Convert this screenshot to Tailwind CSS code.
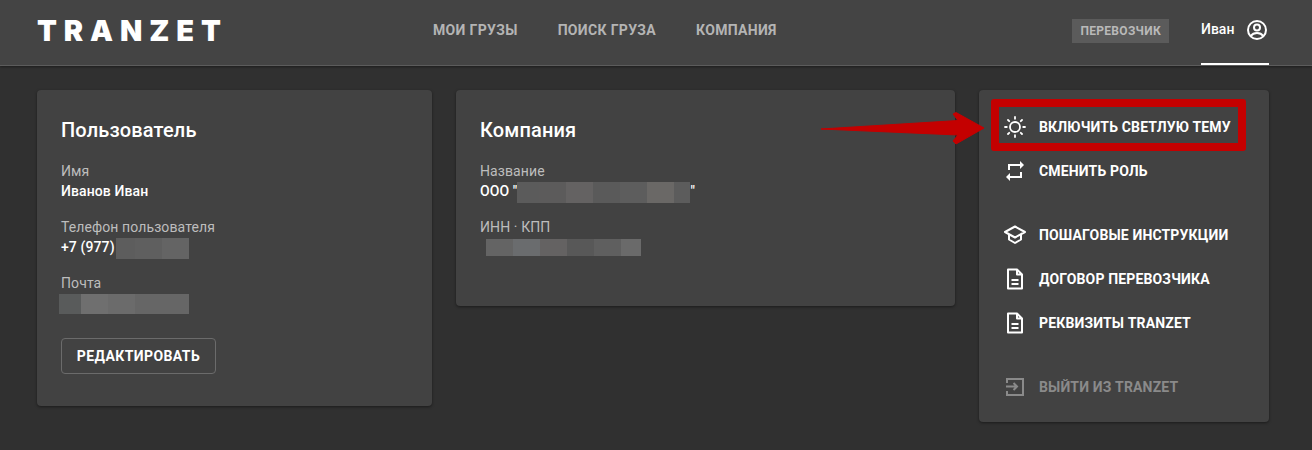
<!DOCTYPE html>
<html lang="ru">
<head>
<meta charset="utf-8">
<script src="https://cdn.jsdelivr.net/npm/@tailwindcss/browser@4"></script>
</head>
<body class="m-0 h-[450px] w-[1312px] overflow-hidden bg-[#303030] font-['Roboto',sans-serif] text-white relative">
<header class="h-[66px] bg-[#444444] border-b border-[#5c5c5c] flex items-start pl-[37px] pr-[43px] relative shadow-[0_1px_2px_rgba(0,0,0,0.4)]">
  <div class="w-[190px] mt-[14px] font-['Inter',sans-serif] font-black text-[29px] leading-[34px] tracking-[6.9px] text-white whitespace-nowrap">TRANZET</div>
  <nav class="flex gap-[40px] ml-[206px] mt-[22px] text-[14px] leading-[16px] font-bold tracking-[0.33px] text-[#b4b4b4] whitespace-nowrap">
    <span>МОИ ГРУЗЫ</span><span>ПОИСК ГРУЗА</span><span>КОМПАНИЯ</span>
  </nav>
  <div class="ml-auto flex items-start">
    <span class="mt-[19px] h-[24px] px-[8px] bg-[#5b5b5b] text-[#b9b9b9] text-[12px] font-bold tracking-[0.3px] leading-[24px]">ПЕРЕВОЗЧИК</span>
    <div class="ml-[32px] w-[68px] h-[65px] border-b-2 border-white flex items-start justify-between">
      <span class="mt-[21px] text-[14px] leading-[16px] font-medium">Иван</span>
      <svg class="mt-[19px] mr-[1px]" width="22" height="22" viewBox="0 0 22 22" fill="none" stroke="white" stroke-width="2"><circle cx="11" cy="11" r="9"/><circle cx="11" cy="8.500" r="3"/><path d="M4.800 17c1.500-2.200 3.600-3 6.200-3s4.700.8 6.200 3"/></svg>
    </div>
  </div>
</header>
<main class="flex gap-[24px] items-start pl-[37px] pt-[24px]">
  <section class="w-[395px] h-[316px] bg-[#424242] rounded-[4px] shadow-[0_1px_3px_rgba(0,0,0,0.45)] px-[24px] pt-[28px]">
    <h2 class="text-[20px] leading-[24px] font-medium tracking-[0.15px]">Пользователь</h2>
    <div class="mt-[19px] text-[14px] leading-[20px] tracking-[0.1px]">
      <div class="text-[#bdbdbd]">Имя</div>
      <div class="font-medium">Иванов Иван</div>
      <div class="mt-[16px] text-[#bdbdbd]">Телефон пользователя</div>
      <div class="font-medium flex h-[20px]">+7 (977)<span class="flex h-[21px] mt-[1px] ml-[1px]"><i class="w-[19px] bg-[#5d5d5d]"></i><i class="w-[27px] bg-[#5f5f5f]"></i><i class="w-[27px] bg-[#646464]"></i></span></div>
      <div class="mt-[16px] text-[#bdbdbd]">Почта</div>
      <div class="flex h-[20px] -ml-[2px] mt-[1px] -mb-[1px]"><i class="w-[22px] bg-[#595b5b]"></i><i class="w-[27px] bg-[#6f6f6f]"></i><i class="w-[27px] bg-[#6b6b6b]"></i><i class="w-[54px] bg-[#666666]"></i></div>
    </div>
    <button class="mt-[25px] w-[155px] h-[36px] border border-[#6b6b6b] rounded-[4px] text-[14px] font-bold tracking-[0.4px] leading-[34px] text-center block">РЕДАКТИРОВАТЬ</button>
  </section>
  <section class="w-[499px] h-[216px] bg-[#424242] rounded-[4px] shadow-[0_1px_3px_rgba(0,0,0,0.45)] px-[24px] pt-[28px]">
    <h2 class="text-[20px] leading-[24px] font-medium tracking-[0.15px]">Компания</h2>
    <div class="mt-[19px] text-[14px] leading-[20px] tracking-[0.1px]">
      <div class="text-[#bdbdbd]">Название</div>
      <div class="font-medium flex h-[20px]">ООО "<span class="flex h-[21px] mt-[1px]"><i class="w-[22px] bg-[#5b5b5b]"></i><i class="w-[27px] bg-[#5c5b5b]"></i><i class="w-[27px] bg-[#646262]"></i><i class="w-[27px] bg-[#5a5a5a]"></i><i class="w-[27px] bg-[#5d5d5d]"></i><i class="w-[27px] bg-[#6a6866]"></i><i class="w-[16px] bg-[#5c5c5c]"></i></span>"</div>
      <div class="mt-[16px] text-[#bdbdbd]">ИНН · КПП</div>
      <div class="flex h-[17px] ml-[6px] mt-[2px]"><i class="w-[27px] bg-[#646464]"></i><i class="w-[27px] bg-[#6a6c6e]"></i><i class="w-[27px] bg-[#646262]"></i><i class="w-[27px] bg-[#585858]"></i><i class="w-[27px] bg-[#5f5f5f]"></i><i class="w-[20px] bg-[#6a6a6a]"></i></div>
    </div>
  </section>
  <aside class="w-[290px] h-[332px] bg-[#424242] rounded-[4px] shadow-[0_1px_3px_rgba(0,0,0,0.45)] pt-[15px] text-[14px] font-bold tracking-[0.15px] whitespace-nowrap">
    <div class="flex items-center h-[44px] pl-[24px] gap-[12px]">
      <svg width="24" height="24" viewBox="0 0 24 24" fill="none" stroke="white" stroke-width="1.800" stroke-linecap="round"><circle cx="12" cy="12" r="5"/><path d="M12 2v1.800M12 20.200V22M2 12h1.800M20.200 12H22M5 5l1.200 1.200M17.800 17.800 19 19M5 19l1.200-1.200M17.800 6.200 19 5"/></svg>
      <span>ВКЛЮЧИТЬ СВЕТЛУЮ ТЕМУ</span>
    </div>
    <div class="flex items-center h-[44px] pl-[24px] gap-[12px]">
      <svg width="24" height="24" viewBox="0 0 24 24" fill="white"><path d="M7 7h10v3l4-4-4-4v3H5v6h2zm10 10H7v-3l-4 4 4 4v-3h12v-6h-2z"/></svg>
      <span>СМЕНИТЬ РОЛЬ</span>
    </div>
    <div class="flex items-center h-[44px] pl-[24px] gap-[12px] mt-[20px]">
      <svg width="24" height="24" viewBox="0 0 24 24" fill="none" stroke="white" stroke-width="2" stroke-linejoin="round"><path d="M12 3.500 2 9 12 14.500 22 9z"/><path d="M6 11.500v5l6 3.500 6-3.500v-5"/></svg>
      <span>ПОШАГОВЫЕ ИНСТРУКЦИИ</span>
    </div>
    <div class="flex items-center h-[44px] pl-[24px] gap-[12px]">
      <svg width="24" height="24" viewBox="0 0 24 24" fill="none" stroke="white" stroke-width="2" stroke-linejoin="round"><path d="M5 2.500h9l5 5V21.500H5zM14 2.500v5h5"/><path d="M8.500 13h7M8.500 17h7"/></svg>
      <span>ДОГОВОР ПЕРЕВОЗЧИКА</span>
    </div>
    <div class="flex items-center h-[44px] pl-[24px] gap-[12px]">
      <svg width="24" height="24" viewBox="0 0 24 24" fill="none" stroke="white" stroke-width="2" stroke-linejoin="round"><path d="M5 2.500h9l5 5V21.500H5zM14 2.500v5h5"/><path d="M8.500 13h7M8.500 17h7"/></svg>
      <span>РЕКВИЗИТЫ TRANZET</span>
    </div>
    <div class="flex items-center h-[44px] pl-[24px] gap-[12px] mt-[20px] text-[#8a8a8a]">
      <svg width="24" height="24" viewBox="0 0 24 24" fill="none" stroke="#8a8a8a" stroke-width="2"><path d="M4 8V4h16v16H4v-4"/><path d="M3 11.500h11M10.500 8 14 11.500 10.500 15"/></svg>
      <span>ВЫЙТИ ИЗ TRANZET</span>
    </div>
  </aside>
</main>
<div class="absolute left-[991px] top-[99px] w-[255px] h-[52px] border-[8px] border-[#c40000] rounded-[3px]"></div>
<svg class="absolute left-[820px] top-[108px]" width="168" height="42" viewBox="0 0 168 42"><path d="M1 21 138 12.500 133 6 136 4.500 164 20 136 36 133 33 138 27Z" fill="#c40000" stroke="#c40000" stroke-width="1" stroke-linejoin="round"/></svg>
</body>
</html>
